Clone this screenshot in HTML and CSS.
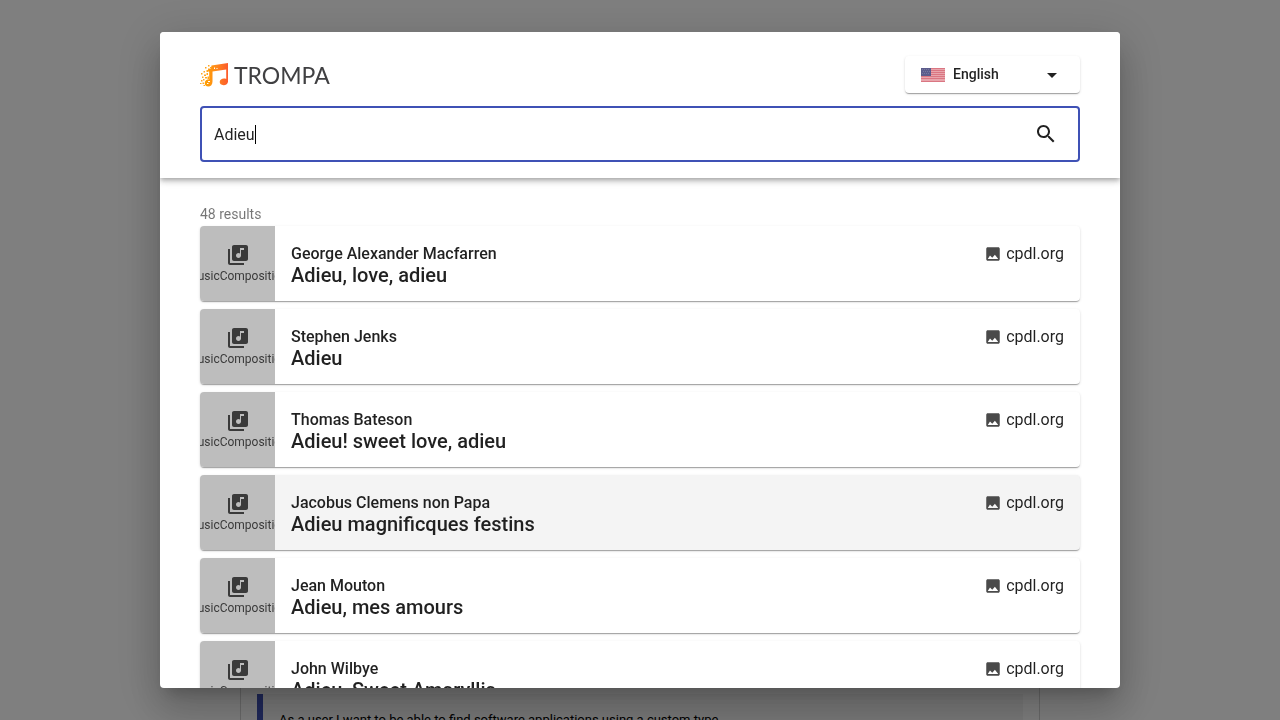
FILE: index.html
```html
<!DOCTYPE html>
<html lang="en">
<head>
<meta charset="utf-8">
<title>TROMPA search</title>
<link rel="stylesheet" href="styles.css">
</head>
<body>
<svg class="symbols" aria-hidden="true">
  <symbol id="music" viewBox="0 0 24 24"><path d="M20 2H8c-1.100 0-2 .9-2 2v12c0 1.100.9 2 2 2h12c1.100 0 2-.9 2-2V4c0-1.100-.9-2-2-2zm-2 5h-3v5.500c0 1.380-1.120 2.500-2.500 2.500S10 13.880 10 12.500s1.120-2.500 2.500-2.500c.57 0 1.080.19 1.500.51V5h4v2zM4 6H2v14c0 1.100.9 2 2 2h14v-2H4V6z"/></symbol>
  <symbol id="image" viewBox="0 0 24 24"><path d="M21 19V5c0-1.100-.9-2-2-2H5c-1.100 0-2 .9-2 2v14c0 1.100.9 2 2 2h14c1.100 0 2-.9 2-2zM8 14l3 3 3.500-4 4.500 5.500H5z"/></symbol>
</svg>

<main class="page">
  <section class="panel">
    <div class="story">
      <div class="story-quote">As a user I want to be able to find software applications using a custom type</div>
    </div>
  </section>
</main>

<div class="backdrop">
  <div class="dialog" role="dialog" aria-modal="true" aria-label="Search">
    <header class="header">
      <div class="topbar">
        <div class="logo">
          <svg class="logo-mark" viewBox="0 0 28 24" aria-hidden="true">
            <defs><linearGradient id="flame" x1="0" x2="1"><stop offset="0" stop-color="#ffa000"/><stop offset=".5" stop-color="#ff8a1c"/><stop offset="1" stop-color="#fc5a2c"/></linearGradient></defs>
            <g fill="url(#flame)">
              <path d="M11.500 2.500 28 0v18.500c0 2.300-2 3.700-4.500 3.700-2.300 0-3.800-1.300-3.800-3.100 0-2.200 2-3.600 4.300-3.600.8 0 1.600.1 2.200.4V6.500L12.500 8.600v9.900c0 3-1.700 5-4.300 5-2.200 0-3.500-1.300-3.500-3.200 0-2.500 2-4 4.500-4V8.500l-1.400-.8.6-2.400 2.300.8z"/>
            </g>
            <g fill="#ffa51f">
              <path d="M1 10h1.500v1.500H1zM3.500 8H5v1.500H3.500zM5 4h1.500v1.500H5zM8 2h1.500v1.500H8zM10 4h1.500v1.500H10zM6.500 7h2v2h-2zM2 13.500h1.500V15H2zM4 11.500h2v1.500H4zM6.500 10h1.500v2H6.500zM5 14h2v1.500H5zM1 17h1.500v1.500H1zM3 16h1.500v1.500H3zM7.500 13.500H9V16H7.500zM0 20h1.500v1H0zM2.500 19.500H4V21H2.500zM3.500 22H5v1H3.500z"/>
            </g>
            <path fill="#fff" d="M8 18h2v1H8zM7 20h1.500v1H7zM14 4.500h1V6h-1zM16.500 5h1v1h-1z"/>
          </svg>
          <span class="logo-name">TROMPA</span>
        </div>
        <label class="language">
          <svg class="flag" viewBox="0 0 24 14" aria-hidden="true">
            <path fill="#e8a5ac" d="M0 0h24v14H0z"/>
            <path stroke="#da7682" d="M0 .5h24M0 2.500h24M0 4.500h24M0 6.500h24M0 8.500h24M0 10.500h24M0 13.500h24"/>
            <path fill="#5c5c8c" d="M0 0h10v8H0z"/>
            <path stroke="#77779f" stroke-dasharray="1 1" d="M1 1.500h8M2 3.500h7M1 5.500h8"/>
          </svg>
          <select class="language-select" aria-label="Language"><option>English</option></select>
          <svg class="arrow" viewBox="0 0 24 24" aria-hidden="true"><path d="M7 10l5 5 5-5z"/></svg>
        </label>
      </div>
      <div class="search">
        <label class="search-field">
          <input class="search-input" type="text" value="Adieu" size="5" aria-label="Search">
          <span class="caret"></span>
        </label>
        <button class="search-button" type="button" aria-label="Search">
          <svg viewBox="0 0 24 24" aria-hidden="true"><path d="M15.500 14h-.79l-.28-.27C15.410 12.590 16 11.110 16 9.500 16 5.910 13.090 3 9.500 3S3 5.910 3 9.500 5.910 16 9.500 16c1.610 0 3.090-.59 4.230-1.570l.27.28v.79l5 4.990L20.490 19l-4.990-5zm-6 0C7.010 14 5 11.990 5 9.500S7.010 5 9.500 5 14 7.010 14 9.500 11.990 14 9.500 14z"/></svg>
        </button>
      </div>
    </header>
    <div class="results">
      <div class="count">48 results</div>
      <article class="card">
        <div class="thumb"><svg class="thumb-icon"><use href="#music"/></svg><span>MusicComposition</span></div>
        <div class="info"><div class="composer">George Alexander Macfarren</div><div class="title">Adieu, love, adieu</div></div>
        <div class="source"><svg class="source-icon"><use href="#image"/></svg>cpdl.org</div>
      </article>
      <article class="card">
        <div class="thumb"><svg class="thumb-icon"><use href="#music"/></svg><span>MusicComposition</span></div>
        <div class="info"><div class="composer">Stephen Jenks</div><div class="title">Adieu</div></div>
        <div class="source"><svg class="source-icon"><use href="#image"/></svg>cpdl.org</div>
      </article>
      <article class="card">
        <div class="thumb"><svg class="thumb-icon"><use href="#music"/></svg><span>MusicComposition</span></div>
        <div class="info"><div class="composer">Thomas Bateson</div><div class="title">Adieu! sweet love, adieu</div></div>
        <div class="source"><svg class="source-icon"><use href="#image"/></svg>cpdl.org</div>
      </article>
      <article class="card card-active">
        <div class="thumb"><svg class="thumb-icon"><use href="#music"/></svg><span>MusicComposition</span></div>
        <div class="info"><div class="composer">Jacobus Clemens non Papa</div><div class="title">Adieu magnificques festins</div></div>
        <div class="source"><svg class="source-icon"><use href="#image"/></svg>cpdl.org</div>
      </article>
      <article class="card">
        <div class="thumb"><svg class="thumb-icon"><use href="#music"/></svg><span>MusicComposition</span></div>
        <div class="info"><div class="composer">Jean Mouton</div><div class="title">Adieu, mes amours</div></div>
        <div class="source"><svg class="source-icon"><use href="#image"/></svg>cpdl.org</div>
      </article>
      <article class="card">
        <div class="thumb"><svg class="thumb-icon"><use href="#music"/></svg><span>MusicComposition</span></div>
        <div class="info"><div class="composer">John Wilbye</div><div class="title">Adieu, Sweet Amaryllis</div></div>
        <div class="source"><svg class="source-icon"><use href="#image"/></svg>cpdl.org</div>
      </article>
    </div>
  </div>
</div>
</body>
</html>
```
FILE: styles.css
```css
* { box-sizing: border-box; }

body {
  margin: 0;
  font-family: Roboto, sans-serif;
  color: rgba(0, 0, 0, 0.87);
  background: #fff;
  overflow: hidden;
}

.symbols { position: absolute; width: 0; height: 0; }

.page {
  display: flex;
  flex-direction: column;
  justify-content: flex-end;
  height: 100vh;
  max-width: 800px;
  margin: 0 auto;
}

.panel {
  padding: 40px 16px 0;
  border: solid #d4d4d4;
  border-width: 1px 1px 0;
}

.story {
  height: 26px;
  border-left: 6px solid #3f51b5;
  background: #f4f4f4;
}

.story-quote {
  padding: 16px;
  font-size: 13px;
  line-height: 20px;
  color: #000;
}

.backdrop {
  position: fixed;
  inset: 0;
  display: flex;
  justify-content: center;
  padding: 32px;
  background: rgba(0, 0, 0, 0.5);
}

.dialog {
  display: flex;
  flex-direction: column;
  width: 100%;
  max-width: 960px;
  overflow: hidden;
  border-radius: 4px;
  background: #fff;
  box-shadow: 0 11px 15px -7px rgba(0, 0, 0, 0.2), 0 24px 38px 3px rgba(0, 0, 0, 0.14), 0 9px 46px 8px rgba(0, 0, 0, 0.12);
}

.header {
  z-index: 1;
  flex: none;
  padding: 24px 40px 16px;
  background: #fff;
  box-shadow: 0 2px 4px -1px rgba(0, 0, 0, 0.2), 0 4px 5px 0 rgba(0, 0, 0, 0.14), 0 1px 10px 0 rgba(0, 0, 0, 0.12);
}

.topbar {
  display: flex;
  align-items: center;
  justify-content: space-between;
  margin-bottom: 13px;
}

.logo { display: flex; align-items: center; gap: 6px; }
.logo-mark { width: 28px; height: 24px; }

.logo-name {
  font-family: Lato, sans-serif;
  font-size: 23px;
  line-height: 32px;
  color: #404042;
}

.language {
  display: flex;
  align-items: center;
  width: 175px;
  height: 37px;
  padding: 0 16px;
  border-radius: 4px;
  background: #fff;
  box-shadow: 0 2px 1px -1px rgba(0, 0, 0, 0.2), 0 1px 1px 0 rgba(0, 0, 0, 0.14), 0 1px 3px 0 rgba(0, 0, 0, 0.12);
}

.flag { flex: none; width: 24px; height: 14px; margin-right: 8px; }

.language-select {
  flex: 1;
  min-width: 0;
  padding: 0 0 2px;
  border: 0;
  appearance: none;
  background: none;
  font: 500 14px/24px Roboto, sans-serif;
  color: inherit;
}

.arrow { flex: none; width: 24px; height: 24px; fill: currentColor; }

.search {
  display: flex;
  align-items: center;
  height: 56px;
  padding: 0 20px 0 12px;
  border: 2px solid #3f51b5;
  border-radius: 4px;
}

.search-field { display: flex; flex: 1; align-items: center; cursor: text; }

.search-input {
  field-sizing: content;
  padding: 2px 0 0;
  border: 0;
  outline: 0;
  background: none;
  font: 400 16px/20px Roboto, sans-serif;
  color: inherit;
  caret-color: transparent;
}

.caret { width: 1px; height: 19px; background: #000; }

.search-button {
  display: flex;
  padding: 0;
  border: 0;
  background: none;
  color: inherit;
}

.search-button svg { width: 24px; height: 24px; fill: currentColor; }

.results {
  flex: 1;
  min-height: 0;
  padding: 26px 40px 0;
  overflow: hidden;
}

.count {
  padding-bottom: 2px;
  font-size: 14px;
  line-height: 20px;
  color: rgba(0, 0, 0, 0.54);
}

.card {
  display: flex;
  height: 75px;
  margin-bottom: 8px;
  overflow: hidden;
  border-radius: 4px;
  background: #fff;
  box-shadow: 0 2px 1px -1px rgba(0, 0, 0, 0.2), 0 1px 1px 0 rgba(0, 0, 0, 0.14), 0 1px 3px 0 rgba(0, 0, 0, 0.12);
}

.card-active { background: #f4f4f4; }

.thumb {
  display: flex;
  flex: none;
  flex-direction: column;
  align-items: center;
  width: 75px;
  padding-top: 17px;
  overflow: hidden;
  background: #bdbdbd;
  font-size: 12px;
  line-height: 18px;
  color: #3a3a3a;
}

.thumb-icon { flex: none; width: 24px; height: 24px; fill: currentColor; }

.info {
  flex: 1;
  min-width: 0;
  padding: 17px 16px 0;
  font-weight: 500;
}

.composer { font-size: 16px; line-height: 22px; }
.title { font-size: 20px; line-height: 20px; }

.source {
  display: flex;
  align-items: center;
  gap: 4px;
  height: 22px;
  margin: 17px 16px 0 0;
  font-size: 16px;
  line-height: 22px;
}

.source-icon { width: 18px; height: 18px; fill: #4a4a4a; }
```
